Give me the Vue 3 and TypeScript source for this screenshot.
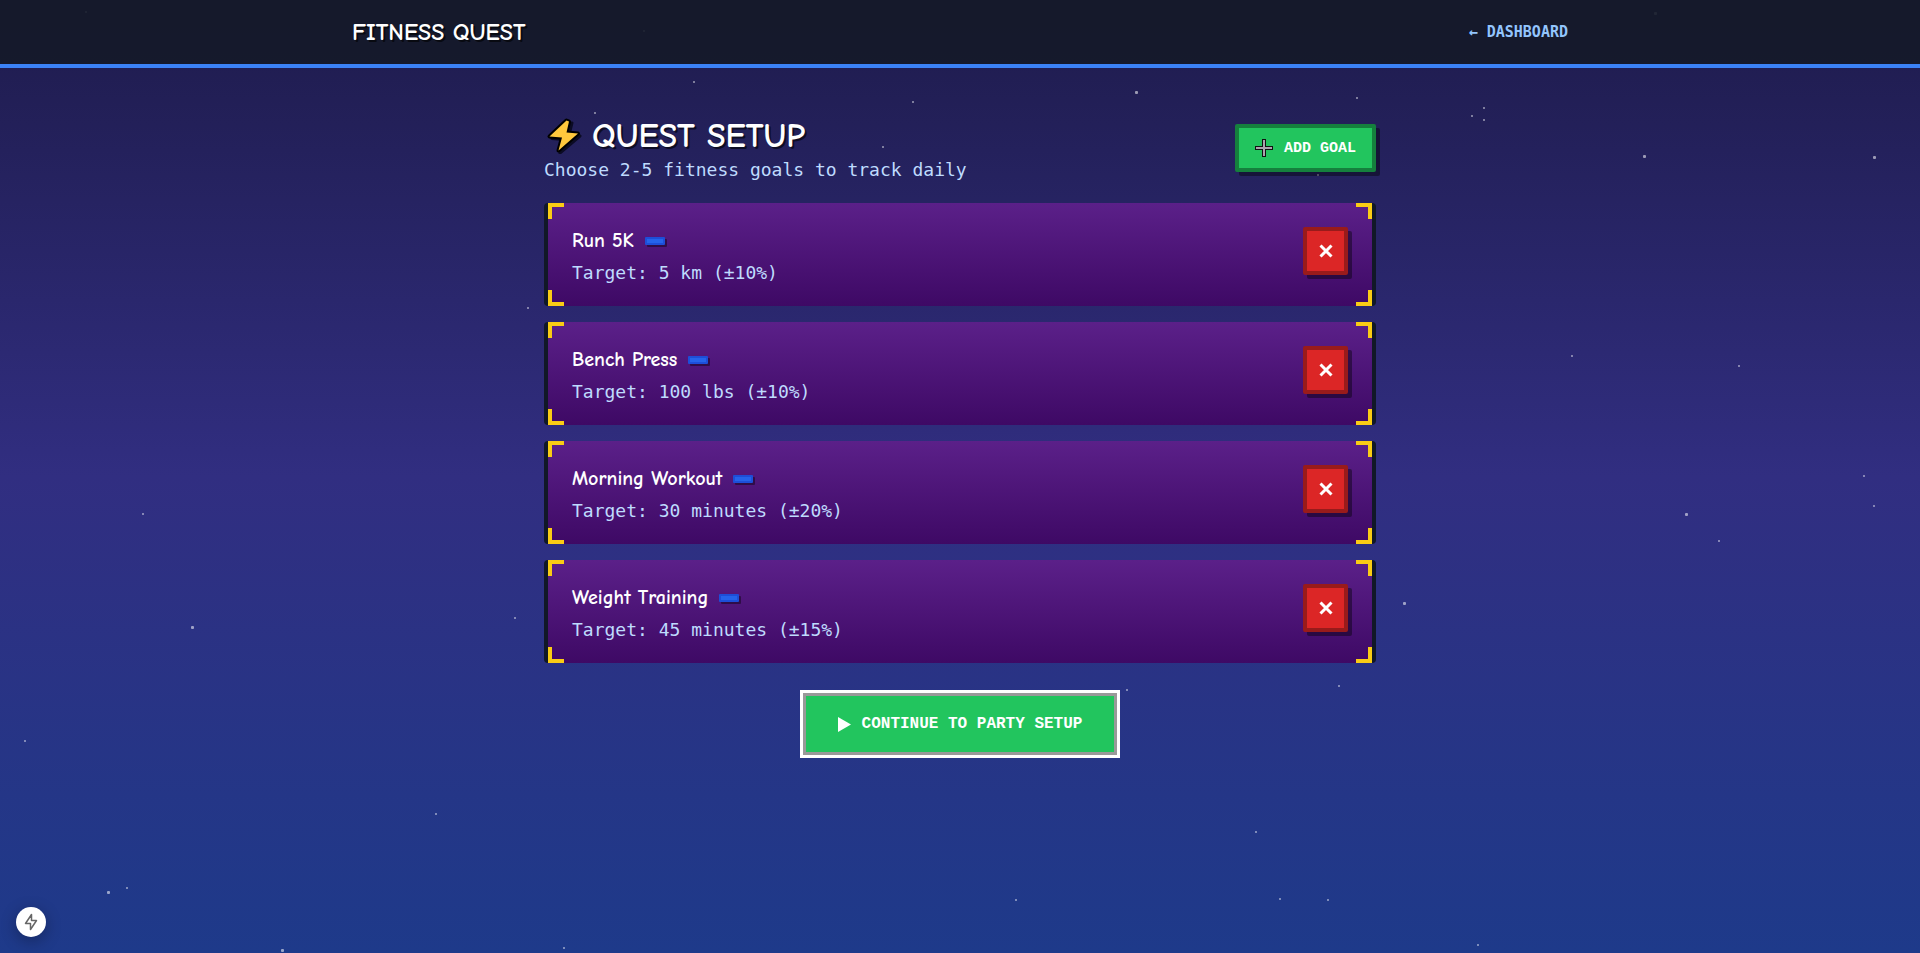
<script setup lang="ts">
import { ref } from 'vue'

interface Goal {
  id: number
  name: string
  target: string
}

interface Star {
  x: number
  y: number
  size: number
  alpha: number
}

const goals = ref<Goal[]>([
  { id: 1, name: 'Run 5K', target: '5 km (±10%)' },
  { id: 2, name: 'Bench Press', target: '100 lbs (±10%)' },
  { id: 3, name: 'Morning Workout', target: '30 minutes (±20%)' },
  { id: 4, name: 'Weight Training', target: '45 minutes (±15%)' },
])

function removeGoal(id: number): void {
  goals.value = goals.value.filter((goal) => goal.id !== id)
}

const small: [number, number][] = [
  [85, 11], [643, 30], [693, 81], [912, 101], [594, 112], [882, 146], [527, 307],
  [1356, 97], [1483, 107], [1471, 115], [1483, 119], [1317, 174], [1571, 355],
  [1738, 365], [1863, 475], [142, 513], [514, 617], [24, 740], [435, 813],
  [126, 887], [563, 947], [1873, 505], [1718, 540], [1338, 685], [1126, 689],
  [1255, 831], [1015, 899], [1279, 898], [1327, 899], [1477, 944],
]
const large: [number, number][] = [
  [1135, 91], [1643, 155], [1873, 156], [1654, 12], [191, 626], [107, 891],
  [281, 949], [1685, 513], [1403, 602],
]
const stars: Star[] = [
  ...small.map(([x, y]) => ({ x, y, size: 2, alpha: 0.42 })),
  ...large.map(([x, y]) => ({ x, y, size: 3, alpha: 0.55 })),
]
</script>

<template>
  <div class="page">
    <svg class="stars" viewBox="0 0 1920 953" preserveAspectRatio="xMidYMid slice" aria-hidden="true">
      <rect
        v-for="(star, i) in stars"
        :key="i"
        :x="star.x"
        :y="star.y"
        :width="star.size"
        :height="star.size"
        :rx="star.size === 3 ? 1 : 0"
        :fill-opacity="star.alpha"
        fill="#fff"
      />
    </svg>

    <header class="topbar">
      <div class="topbar-inner">
        <span class="brand">FITNESS QUEST</span>
        <a class="back" href="#dashboard">← DASHBOARD</a>
      </div>
    </header>

    <main class="main">
      <div class="intro">
        <div class="intro-text">
          <h1 class="heading">
            <svg class="bolt" viewBox="0 0 36 36" aria-hidden="true">
              <path d="M23 5 6 20.5 17 21.500 14 35 34 18 23.500 15 26 5Z" fill="#0b0b24" stroke="#0b0b24" stroke-width="3" stroke-linejoin="round" />
              <path d="M20.500 2.500 3.500 18.500 16 19.500 12.500 32.500 32 15.500 20.500 14.500 23 3.500Z" fill="#ffc83d" stroke="#000" stroke-width="4" stroke-linejoin="round" paint-order="stroke" />
            </svg>
            <span>QUEST SETUP</span>
          </h1>
          <p class="subtitle">Choose 2-5 fitness goals to track daily</p>
        </div>
        <button class="add" type="button">
          <svg class="plus" viewBox="0 0 18 18" aria-hidden="true">
            <path d="M7 0h4v7h7v4h-7v7H7v-7H0V7h7z" fill="#111" />
            <path d="M8 1h2v7h7v2h-7v7H8v-7H1V8h7z" fill="#aaa2ae" />
          </svg>
          <span>ADD GOAL</span>
        </button>
      </div>

      <ul class="goals">
        <li v-for="goal in goals" :key="goal.id" class="card">
          <i class="corner tl"></i>
          <i class="corner tr"></i>
          <i class="corner bl"></i>
          <i class="corner br"></i>
          <div class="info">
            <div class="name-row">
              <h2 class="name">{{ goal.name }}</h2>
              <span class="badge"></span>
            </div>
            <p class="target">Target: {{ goal.target }}</p>
          </div>
          <button class="remove" type="button" :aria-label="`Remove ${goal.name}`" @click="removeGoal(goal.id)">
            <svg viewBox="0 0 14 14" aria-hidden="true">
              <path d="M1.500 1.500 12.500 12.500M12.500 1.500 1.500 12.500" stroke="#fff" stroke-width="3" fill="none" />
            </svg>
          </button>
        </li>
      </ul>

      <button class="continue" type="button">
        <svg class="play" viewBox="0 0 13 15" aria-hidden="true"><path d="M0 0 13 7.500 0 15z" fill="#fff" /></svg>
        <span>CONTINUE TO PARTY SETUP</span>
      </button>
    </main>

    <button class="devtool" type="button" aria-label="Developer tools">
      <svg viewBox="0 0 16 18" aria-hidden="true">
        <path d="M8.500 1.500 2.500 10.500H7.500V16.500L13.500 7.500H8.500Z" fill="none" stroke="#666" stroke-width="1.500" stroke-linejoin="round" />
      </svg>
    </button>
  </div>
</template>

<style>
body {
  margin: 0;
}
</style>

<style scoped>
.page {
  --mono: Consolas, "DejaVu Sans Mono", monospace;
  --button: "Liberation Mono", monospace;
  --display: "Comic Neue", "Comic Sans MS", cursive;
  position: relative;
  box-sizing: border-box;
  min-height: 100vh;
  background: linear-gradient(180deg, #1e1b4b 0%, #312e81 50%, #1e3a8a 100%);
  color: #fff;
  font-family: var(--mono);
}

.page * {
  box-sizing: border-box;
}

.stars {
  position: absolute;
  inset: 0;
  width: 100%;
  height: 100%;
}

.topbar {
  position: relative;
  border-bottom: 4px solid #3b82f6;
  background: rgba(20, 26, 40, 0.9);
}

.topbar-inner {
  display: flex;
  align-items: center;
  justify-content: space-between;
  max-width: 1280px;
  height: 64px;
  margin: 0 auto;
  padding: 0 32px;
}

.brand {
  font-family: var(--display);
  font-size: 24px;
  font-weight: 700;
  text-shadow: 2px 2px 0 rgba(0, 0, 0, 0.6);
}

.back {
  color: #93c5fd;
  font-size: 15px;
  font-weight: 700;
  text-decoration: none;
}

.main {
  position: relative;
  display: flex;
  flex-direction: column;
  max-width: 896px;
  margin: 0 auto;
  padding: 44px 32px;
}

.intro {
  display: flex;
  align-items: center;
  justify-content: space-between;
  margin-bottom: 19px;
}

.intro-text {
  padding-bottom: 4px;
}

.heading {
  display: flex;
  align-items: center;
  gap: 10px;
  margin: 0;
  font-family: var(--display);
  font-size: 34px;
  font-weight: 700;
  line-height: 48px;
  text-shadow: 2px 2px 0 rgba(0, 0, 0, 0.6);
}

.bolt {
  width: 36px;
  height: 36px;
  margin-left: 2px;
}

.subtitle {
  margin: 0;
  color: #bfdbfe;
  font-size: 18px;
  line-height: 20px;
}

.add,
.remove,
.continue {
  display: flex;
  align-items: center;
  justify-content: center;
  color: #fff;
  font-family: var(--button);
  font-weight: 700;
  cursor: pointer;
}

.add {
  gap: 11px;
  height: 48px;
  padding: 0 16px;
  border: 4px solid #15803d;
  border-radius: 2px;
  background: #22c55e;
  box-shadow: 4px 4px 0 rgba(0, 0, 0, 0.4);
  font-size: 15px;
}

.plus {
  width: 18px;
  height: 18px;
}

.goals {
  display: flex;
  flex-direction: column;
  gap: 16px;
  margin: 0 4px;
  padding: 0;
  list-style: none;
}

.card {
  position: relative;
  display: flex;
  align-items: flex-start;
  justify-content: space-between;
  padding: 24px 24px 20px;
  border-radius: 4px;
  background: linear-gradient(180deg, #5b2089, #3e0965);
  box-shadow: -4px 0 0 #111827, 4px 0 0 #111827;
}

.corner {
  position: absolute;
  width: 16px;
  height: 16px;
  border: 0 solid #facc15;
}

.tl {
  top: 0;
  left: 0;
  border-width: 4px 0 0 4px;
}

.tr {
  top: 0;
  right: 0;
  border-width: 4px 4px 0 0;
}

.bl {
  bottom: 0;
  left: 0;
  border-width: 0 0 4px 4px;
}

.br {
  right: 0;
  bottom: 0;
  border-width: 0 4px 4px 0;
}

.name-row {
  display: flex;
  align-items: center;
  gap: 11px;
  height: 28px;
}

.name {
  margin: 0;
  font-family: var(--display);
  font-size: 20px;
  font-weight: 700;
  line-height: 28px;
}

.badge {
  width: 20px;
  height: 8px;
  border: 2px solid #1d4ed8;
  border-radius: 1px;
  background: #2563eb;
  box-shadow: 2px 2px 0 rgba(0, 0, 0, 0.4);
}

.target {
  margin: 4px 0 0;
  color: #bfdbfe;
  font-size: 18px;
  line-height: 27px;
}

.remove {
  width: 45px;
  height: 48px;
  padding: 0;
  border: 4px solid #991b1b;
  border-radius: 2px;
  background: #dc2626;
  box-shadow: 4px 4px 0 rgba(0, 0, 0, 0.4);
}

.remove svg {
  width: 14px;
  height: 14px;
}

.continue {
  align-self: center;
  gap: 11px;
  height: 62px;
  margin-top: 30px;
  padding: 0 32px;
  border: 3px solid #999;
  outline: 3px solid #fff;
  background: #22c55e;
  font-size: 16px;
}

.play {
  width: 13px;
  height: 15px;
}

.devtool {
  position: fixed;
  bottom: 16px;
  left: 16px;
  display: grid;
  place-items: center;
  width: 30px;
  height: 30px;
  padding: 0;
  border: 0;
  border-radius: 50%;
  background: #fff;
  box-shadow: 0 4px 16px rgba(0, 0, 0, 0.3);
}

.devtool svg {
  width: 16px;
  height: 18px;
}
</style>
